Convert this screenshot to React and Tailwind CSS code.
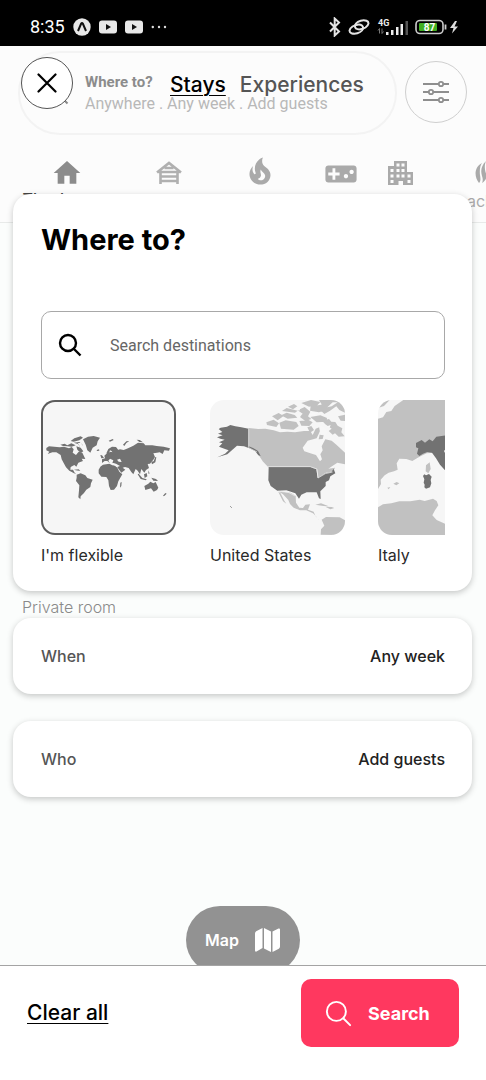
import React from "react";
import { MdHome, MdVideogameAsset } from "react-icons/md";
import { IoSearchOutline } from "react-icons/io5";

function StatusBar() {
  return (
    <div className="relative z-20 flex h-[46px] items-center justify-between bg-black pl-[30px] pr-[26px] pt-2 text-white">
      <div className="flex items-center gap-2">
        <span className="font-[Roboto,sans-serif] text-lg leading-5">8:35</span>
        <svg width="18" height="18" viewBox="0 0 18 18" aria-hidden="true">
          <circle cx="9" cy="9" r="8.7" fill="#e8e8e8" />
          <path d="M5 13 8.2 5.6Q9 4.4 9.8 5.6L13 13" fill="none" stroke="#111" strokeWidth="2" />
        </svg>
        {[0, 1].map((i) => (
          <svg key={i} width="18" height="14" viewBox="0 0 18 14" aria-hidden="true">
            <rect width="18" height="13" y=".5" rx="3" fill="#e8e8e8" />
            <path d="m7 4 5 3-5 3z" fill="#111" />
          </svg>
        ))}
        <svg width="16" height="4" viewBox="0 0 16 4" fill="#ddd" aria-hidden="true">
          <circle cx="1.8" cy="2" r="1.2" />
          <circle cx="8" cy="2" r="1.2" />
          <circle cx="14" cy="2" r="1.2" />
        </svg>
      </div>
      <div className="flex items-center gap-[7px]">
        <svg width="12" height="20" viewBox="0 0 12 20" fill="none" stroke="#e4e4e4" strokeWidth="2" aria-hidden="true">
          <path d="m1 5.500 9 9-4.300 4V1.500l4.300 4-9 9" />
        </svg>
        <svg width="22" height="16" viewBox="0 0 22 16" fill="none" stroke="#e4e4e4" strokeWidth="2" strokeLinecap="round" aria-hidden="true">
          <path d="M8 9.500C10 11 14.500 10.500 17.500 8.500 21 6 21.500 3 18.500 1.800 15 .5 10 2 8 4.500 6.500 6.500 7 8.500 8 9.500" />
          <path d="M14 6.500C12 5 7.500 5.500 4.500 7.500 1 10 .5 13 3.500 14.200 7 15.500 12 14 14 11.500 15.500 9.500 15 7.500 14 6.500" />
        </svg>
        <svg width="31" height="18" viewBox="0 0 31 18" fill="#eee" aria-label="4G signal">
          <text x="1" y="8" fontSize="9" fontWeight="700" fontFamily="Roboto, sans-serif">4G</text>
          <path d="M2.500 10.500v5M1 12.500l1.500-2M5 10.500v5m0 0 1.500-2" stroke="#777" fill="none" />
          <path d="M9 14h2.500v3H9zM14 12h2.500v5H14zM19 9h2.500v8H19zM23.500 6H26v11h-2.500z" />
          <path d="M28.500 3H31v14h-2.500z" fill="#555" />
        </svg>
        <svg width="45" height="16" viewBox="0 0 45 16" aria-label="Battery 87 percent">
          <rect x="1" y="1.500" width="27" height="13" rx="4" fill="none" stroke="#ccc" strokeWidth="1.600" />
          <rect x="4" y="4" width="18" height="8" rx="1" fill="#40ae20" />
          <path d="M30.500 5.500v5" stroke="#ccc" strokeWidth="1.800" />
          <text x="14.500" y="11.500" textAnchor="middle" fontSize="10" fontWeight="700" fill="#fff" fontFamily="Roboto, sans-serif">87</text>
          <path d="m40 2-5 7h3.500l-1.500 5.500 6-7h-3.500L42 2z" fill="#ddd" />
        </svg>
      </div>
    </div>
  );
}

function CabinIcon() {
  return (
    <svg width="26" height="23" viewBox="0 0 26 23" fill="none" stroke="#b0b0b0" strokeWidth="2.600" aria-hidden="true">
      <path d="M1 11.500 13 2l12 9.500M4.500 10v13M21.500 10v13M2.500 11h21M4.500 15.500h17M4.500 20h17M8.500 7h9" />
    </svg>
  );
}

function FireIcon() {
  return (
    <svg width="36" height="36" viewBox="0 0 24 24" fill="#aaa" aria-hidden="true">
      <path d="M17.660 11.200C17.430 10.900 17.150 10.640 16.890 10.380C16.220 9.780 15.460 9.350 14.820 8.720C13.330 7.260 13 4.850 13.950 3C13 3.230 12.170 3.750 11.460 4.320C8.870 6.400 7.850 10.070 9.070 13.220C9.110 13.320 9.150 13.420 9.150 13.550C9.150 13.770 9 13.970 8.800 14.050C8.570 14.150 8.330 14.090 8.140 13.930C8.080 13.880 8.040 13.830 8 13.760C6.870 12.330 6.690 10.280 7.450 8.640C5.780 10 4.870 12.300 5 14.470C5.060 14.970 5.120 15.470 5.290 15.970C5.430 16.570 5.700 17.170 6 17.700C7.080 19.430 8.950 20.670 10.960 20.920C13.100 21.190 15.390 20.800 17.030 19.320C18.860 17.660 19.500 15 18.560 12.720L18.430 12.460C18.220 12 17.660 11.200 17.660 11.200M14.500 17.500C14.220 17.740 13.760 18 13.400 18.100C12.280 18.500 11.160 17.940 10.500 17.280C11.690 17 12.400 16.120 12.610 15.230C12.780 14.430 12.460 13.770 12.330 13C12.210 12.260 12.230 11.630 12.500 10.940C12.690 11.320 12.890 11.700 13.130 12C13.900 13 15.110 13.440 15.370 14.800C15.410 14.940 15.430 15.080 15.430 15.230C15.460 16.050 15.100 16.950 14.500 17.500Z" />
    </svg>
  );
}

function CityIcon() {
  return (
    <svg width="25" height="24" viewBox="0 0 25 24" fill="#aaa" fillRule="evenodd" aria-hidden="true">
      <path d="M6 0h13v11h6v13H15v-4h-4.500v4H0V5h6zM8.500 2.500v3h3v-3zm5 0v3h3v-3zM2.500 8v3h3V8zm6 0v3h3V8zm5 0v3h3V8zm-11 5.500v3h3v-3zm6 0v3h3v-3zm5 0v3h3v-3zm6 0v3h3v-3zm-17 5.500v3h3v-3zm17 0v3h3v-3z" />
    </svg>
  );
}

function BallIcon() {
  return (
    <svg width="26" height="24" viewBox="0 0 26 24" fill="#aaa" aria-hidden="true">
      <path d="M7 2C-1 6-1 16 4 22c2-2 1.500-5 1-8-.5-5 0-9 2-12zM11 0C6 5 5.500 10 7 15c1 3 1 5 0 7 5-3 5-7 3.500-11C9.500 7 9.500 4 11 0zM13 1h5c8 5 8 16 2 21-8-4-8-13-7-21z" />
    </svg>
  );
}

function MapIcon() {
  return (
    <svg width="25" height="24" viewBox="0 0 25 24" fill="#fff" aria-hidden="true">
      <path d="M7.500 0v20L1.500 23.500Q0 24 0 22.500V5.500Q0 4 1.200 3.300zM9 0l7 3.500V24l-7-3.500zM17.500 3.500l6-3Q25 0 25 1.500v17q0 1.500-1.200 2.200L17.500 24z" />
    </svg>
  );
}

function Categories() {
  return (
    <nav className="flex h-[88px] items-start border-b border-[#e8eae9] pt-[22px]" aria-label="Categories">
      <a href="#tiny" className="ml-[22px] flex w-[90px] shrink-0 flex-col items-center">
        <MdHome size={32} color="#8c8c8c" />
        <span className="whitespace-nowrap text-base font-medium leading-5 text-[#444]">Tiny homes</span>
      </a>
      <a href="#cabins" aria-label="Cabins" className="ml-11 mt-1 shrink-0"><CabinIcon /></a>
      <a href="#trending" aria-label="Trending" className="-mt-1 ml-[60px] shrink-0"><FireIcon /></a>
      <a href="#play" aria-label="Play" className="ml-[46px] shrink-0"><MdVideogameAsset size={34} color="#aaa" /></a>
      <a href="#cities" aria-label="Cities" className="ml-[30px] mt-1 shrink-0"><CityIcon /></a>
      <a href="#beach" className="ml-[34px] mt-1 flex w-[82px] shrink-0 flex-col items-center">
        <BallIcon />
        <span className="self-start pt-[6px] text-base leading-5 text-[#aaa]">Beach</span>
      </a>
    </nav>
  );
}

function Listing() {
  return (
    <div className="flex grow flex-col bg-[#fbfdfc]">
      <div className="bg-[#fcfcfc]">
        <div className="flex items-start pl-[18px] pr-[19px] pt-[5px]">
          <div className="flex h-[84px] grow items-center rounded-full border-2 border-[#f3f3f3] pl-6">
            <svg width="26" height="26" viewBox="0 0 26 26" fill="none" stroke="#888" strokeWidth="2" aria-hidden="true">
              <circle cx="11" cy="11" r="9" />
              <path d="m17.500 17.500 6 6" />
            </svg>
            <div className="ml-[15px] flex flex-col font-[Roboto,sans-serif]">
              <span className="pt-px text-[15px] font-bold leading-5 text-[#8c8c8c]">Where to?</span>
              <span className="whitespace-nowrap text-base leading-6 text-[#b8b8b8]">Anywhere . Any week . Add guests</span>
            </div>
          </div>
          <button aria-label="Filters" className="ml-2 mt-[10px] flex size-[62px] shrink-0 items-center justify-center rounded-full border border-[#cfcfcf]">
            <svg width="28" height="24" viewBox="0 0 28 24" fill="#fcfcfc" stroke="#8e8e8e" strokeWidth="1.800" aria-hidden="true">
              <path d="M1 4h26M1 12h26M1 20h26" />
              <circle cx="19" cy="4" r="2.200" />
              <circle cx="9" cy="12" r="2.200" />
              <circle cx="19" cy="20" r="2.200" />
            </svg>
          </button>
        </div>
        <Categories />
      </div>
      <p className="pl-[22px] pt-[374px] text-base font-light leading-5 text-[#8a8a8a]">Private room</p>
      <div className="flex grow items-end justify-center pb-[106px]">
        <button className="flex h-[68px] w-[114px] items-center justify-between rounded-full bg-[#929292] pl-[19px] pr-[20px] text-base font-semibold text-white">
          Map
          <MapIcon />
        </button>
      </div>
    </div>
  );
}

function WorldMap() {
  return (
    <svg viewBox="32 30 405 405" className="size-full" fill="#727272" aria-hidden="true">
      <path d="M48 174 56 169 88 172 101 170 116 175 124 171 130 178 127 188 137 195 145 185 156 188 165 207 154 206 158 213 144 218 138 230 132 225 121 231 120 239 128 239 133 248 138 252 131 250 117 242 107 232 100 219 94 208 91 195 78 187 66 187 52 192 57 185 48 181z" />
      <path d="M90 164 103 161 111 166 123 160 136 166 124 170 111 169 98 168zM121 153 132 145 151 139 158 143 147 151 130 155zM138 169 151 173 159 184 151 189 141 179zM130 158l17-2 11 10-9 4-6-8z" />
      <path d="M158 148 173 140 190 138 209 143 202 154 199 166 187 173 180 188 171 181 166 164z" />
      <path d="M139 254 151 250 165 256 171 264 187 269 182 280 180 291 168 299 161 309 151 319 150 328 144 322 146 301 147 286 137 273 139 263z" />
      <path d="M210 230 218 224 237 221 246 226 258 227 267 245 276 253 270 263 264 274 260 288 251 299 241 300 236 288 234 271 228 261 213 260 205 250 205 239z" />
      <path d="M215 219 215 208 224 205 222 197 231 189 242 185 251 188 260 181 269 178 280 180 293 175 309 167 323 158 340 160 345 166 366 166 379 168 400 170 419 175 416 182 402 181 397 192 388 187 380 188 369 190 374 201 369 209 359 221 352 222 356 234 347 240 342 248 333 237 329 253 322 242 316 237 309 253 303 246 295 234 284 231 277 233 285 239 273 248 263 235 257 223 246 219 249 211 239 206 234 212 239 220 231 213 223 213z" />
      <path d="M228 190 234 177 245 170 257 171 264 180 257 192 247 197 245 184 239 181 235 194z" />
      <path d="M342 288 354 281 360 275 369 280 376 276 384 293 380 300 370 305 362 295 345 300zM270 278l4-2-1 12-4 5zM398 317l7-8 4 2-8 8zM199 180l7-2 1 4-7 1zM235 152l12-5 3 3-11 5zM278 164l10-10 9-1-9 6-6 9zM319 149l9 1 10 7-11-1zM363 263l14 4 6 6-14-1zM325 251l11 13 13 4-2 3-16-4-9-14zM341 253l8-4 2 10-8 5zM363 215l7-1 5-13 3 1-3 15-10 6zM131 239l14-1 5 5-14-2zM213 205l-3-10 5 1 6 8zM353 241l5 9-3 2z" />
      <path d="m245 218 12 3 12 7-10 4-9-8zM260 209l9-3 5 10-9-1zM142 160l9-2 7 9-8 5z" fill="#f6f6f6" />
    </svg>
  );
}

function AmericaMap() {
  return (
    <svg viewBox="43 30 405 405" className="size-full" aria-hidden="true">
      <path fill="#c1c1c1" d="M159 114 187 117 209 116 234 121 253 127 275 125 298 127 325 123 344 123 351 135 360 116 371 112 373 123 363 145 336 152 321 173 326 184 351 192 361 195 373 214 379 208 374 193 381 181 378 169 389 148 408 152 423 165 440 181 448 188V223L425 218 409 229 398 236 418 233 413 244 388 249 368 264 364 239 344 232H218L201 214 189 195 177 182 159 172z" />
      <path fill="#c1c1c1" d="M212 97 234 89 250 100 242 111 214 105zM229 79 249 69 264 78 246 91zM251 98 270 91 302 96 309 108 294 119 256 116zM256 76l17-8 24 7 8 8-29 3zM259 63l14-9 33 8-8 6zM277 50l18-8 10 7-13 9zM306 61l21-10 17 14-7 14 10 8-18 6-17-13 9-9zM311 93l28-3 12 7-10 11-24-1zM344 81l30-5 20 8-2 11-29 2zM317 39l29-9 28 6-9 10-25 4zM345 49l32-5 15 15-22 8-27-5zM370 30h74l-17 15-25 18-16 9-16-16 8-13zM379 92l21-5 7 8 12 1 7 11 14 8-3 12 10 12-18 1-11-10-7 4-12-11 9-7-19-13zM335 112l12-4 8 12-12 8zM372 134l12 2-3 11-12 1zM414 38l34-8v38l-17-8-9-11zM427 79l21-5v19l-13-1z" />
      <path fill="#f7f7f7" d="m371 106 14 6 11 17-9 7-14-7zM298 58l17-4-4 8zM302 78l15-2-8 10zM349 68l16 2-7 6-16-2zM394 109l11-4-5 13zM426 37l-18 12-13 3 16-15z" />
      <path fill="#c1c1c1" d="M248 304 285 308 300 318 301 338 311 353 322 354 329 344 343 343 337 359 354 365 359 377 371 391 382 398 370 390 361 379 352 370 332 361 313 361 294 353 283 342 278 330 262 313z" />
      <path fill="#c1c1c1" d="m248 306 6 2 12 24 6 9-10-7zM359 344l17-4 23 9-16-1zM389 350l19 1 8 3-12 4zM378 389 391 381 432 382 448 391v25l-11 13-16 6-46-1 1-16 10-11z" />
      <path fill="#727272" d="M159 116 137 112 119 109 104 105 94 110 75 113 69 117 80 126 67 131 81 136 64 142 74 146 87 149 70 157 80 160 70 170 88 177 99 181 88 191 65 202 95 193 112 178 124 167 145 169 159 174 179 184 188 196 195 198 187 183 172 174 159 169zM219 231H344L362 238 366 264 389 250 407 246 414 237 419 250 404 259 400 271 390 276 390 288 374 304 375 327 370 325 363 307 333 307 317 314 310 326 299 310 272 301 245 302 225 288 218 271z" />
      <path fill="none" stroke="#f3f3f3" strokeWidth="2" d="M159 116v57l25 13M216 230h128l20 7 3 27 22-13 22-5M248 304l30 3 20 11" />
      <path d="m104 349 4 4" stroke="#777" strokeWidth="3" />
    </svg>
  );
}

function ItalyMap() {
  return (
    <svg viewBox="114 30 202 405" className="h-full w-full" preserveAspectRatio="xMinYMid slice" aria-hidden="true">
      <path fill="#c1c1c1" d="M114 86 129 82 139 66 154 63 164 48 190 30H316V220L299 205 286 188 260 190 243 198 232 204 217 213 199 207 178 206 170 220 173 239 162 244 146 248 134 256 122 269 123 282 114 297zM114 352 129 343 154 340 178 334 211 334 239 329 254 333 279 326 290 333 295 346 285 361 277 376 290 390 316 402V435H114zM258 226l11-9 3 20-7 13-8-6zM160 281l10-5 8 4-9 6zM142 293l9-2-5 7zM114 45l15-14 20-1-17 18-18 6z" />
      <path fill="#727272" d="M228 159 245 150 255 158 268 148 278 154 289 140 316 136V242L300 224 288 205 276 188 262 186 249 191 238 198 231 191 235 175 228 172zM249 258l4-5 5 3 9-4 8 8-3 10 2 10-4 12-12 4-5-4 1-8-3-6 2-10z" />
      <path d="m312 183 4-5v13z" fill="#f7f7f7" />
    </svg>
  );
}

function Destination({ label, children, frameClass, className }) {
  return (
    <button className={"flex flex-col items-start gap-2 text-left " + className}>
      <span className={"h-[135px] w-full overflow-hidden bg-[#f6f6f6] " + frameClass}>{children}</span>
      <span className="whitespace-nowrap text-base leading-6 text-[#2a2a2a]">{label}</span>
    </button>
  );
}

const cardClass = "rounded-[18px] bg-white shadow-[0_2px_6px_rgba(0,0,0,0.22)]";
const rowClass = cardClass + " flex h-[76px] items-center justify-between pl-7 pr-[27px] text-base font-medium";

function SearchOverlay() {
  return (
    <div className="absolute inset-0 z-10 flex flex-col pt-[46px]">
      <header className="flex items-start pl-[21px] pt-[11px]">
        <button aria-label="Close" className="flex size-[52px] items-center justify-center rounded-full border border-[#555] bg-white">
          <svg width="20" height="20" viewBox="0 0 20 20" stroke="#000" strokeWidth="2.200" strokeLinecap="round" aria-hidden="true">
            <path d="m1.500 1.500 17 17m0-17-17 17" />
          </svg>
        </button>
        <div className="ml-[97px] mt-3 flex gap-[14px] text-[21px] font-medium leading-8">
          <button className="text-black underline decoration-1 underline-offset-[3px]">Stays</button>
          <button className="text-[#555]">Experiences</button>
        </div>
      </header>
      <main className="flex flex-col gap-[27px] pl-[13px] pr-[14px] pt-[85px]">
        <section className={cardClass + " pb-6 pl-7 pr-[27px] pt-[30px]"}>
          <h1 className="text-[29px] font-bold leading-8 text-black">Where to?</h1>
          <label className="mt-[55px] flex h-[68px] items-center rounded-[10px] border border-[#a8a8a8] pl-4">
            <svg width="24" height="24" viewBox="0 0 24 24" fill="none" stroke="#000" strokeWidth="2.400" aria-hidden="true">
              <circle cx="10" cy="10" r="8" />
              <path d="m16 16 6.500 6.500" />
            </svg>
            <input
              aria-label="Search destinations"
              placeholder="Search destinations"
              className="ml-7 min-w-0 grow bg-transparent pt-px font-[Roboto,sans-serif] text-base text-black outline-none placeholder:text-[#666]"
            />
          </label>
          <div className="mt-[21px] flex overflow-hidden">
            <Destination label="I'm flexible" frameClass="rounded-[14px] shadow-[inset_0_0_0_2px_#5c5c5c]" className="w-[135px] shrink-0">
              <WorldMap />
            </Destination>
            <Destination label="United States" frameClass="rounded-[14px]" className="ml-[34px] w-[135px] shrink-0">
              <AmericaMap />
            </Destination>
            <Destination label="Italy" frameClass="rounded-l-[14px]" className="ml-[33px] min-w-0 grow">
              <ItalyMap />
            </Destination>
          </div>
        </section>
        <button className={rowClass}>
          <span className="text-[#555]">When</span>
          <span className="text-[#222]">Any week</span>
        </button>
        <button className={rowClass}>
          <span className="text-[#555]">Who</span>
          <span className="text-[#222]">Add guests</span>
        </button>
      </main>
      <footer className="mt-auto flex h-[115px] items-start justify-between border-t border-[#a4a4a4] bg-white px-[27px] pt-[13px]">
        <button className="mt-[18px] text-[21px] font-medium leading-8 text-black underline decoration-1 underline-offset-[3px]">Clear all</button>
        <button className="flex h-[68px] w-[158px] items-center gap-[14px] rounded-[10px] bg-[#ff385f] pl-[22px] text-[18px] font-bold text-white">
          <IoSearchOutline size={31} />
          Search
        </button>
      </footer>
    </div>
  );
}

export default function App() {
  return (
    <div className="relative flex min-h-screen flex-col overflow-hidden bg-[#fbfdfc] font-[Inter,sans-serif]">
      <StatusBar />
      <Listing />
      <SearchOverlay />
    </div>
  );
}
